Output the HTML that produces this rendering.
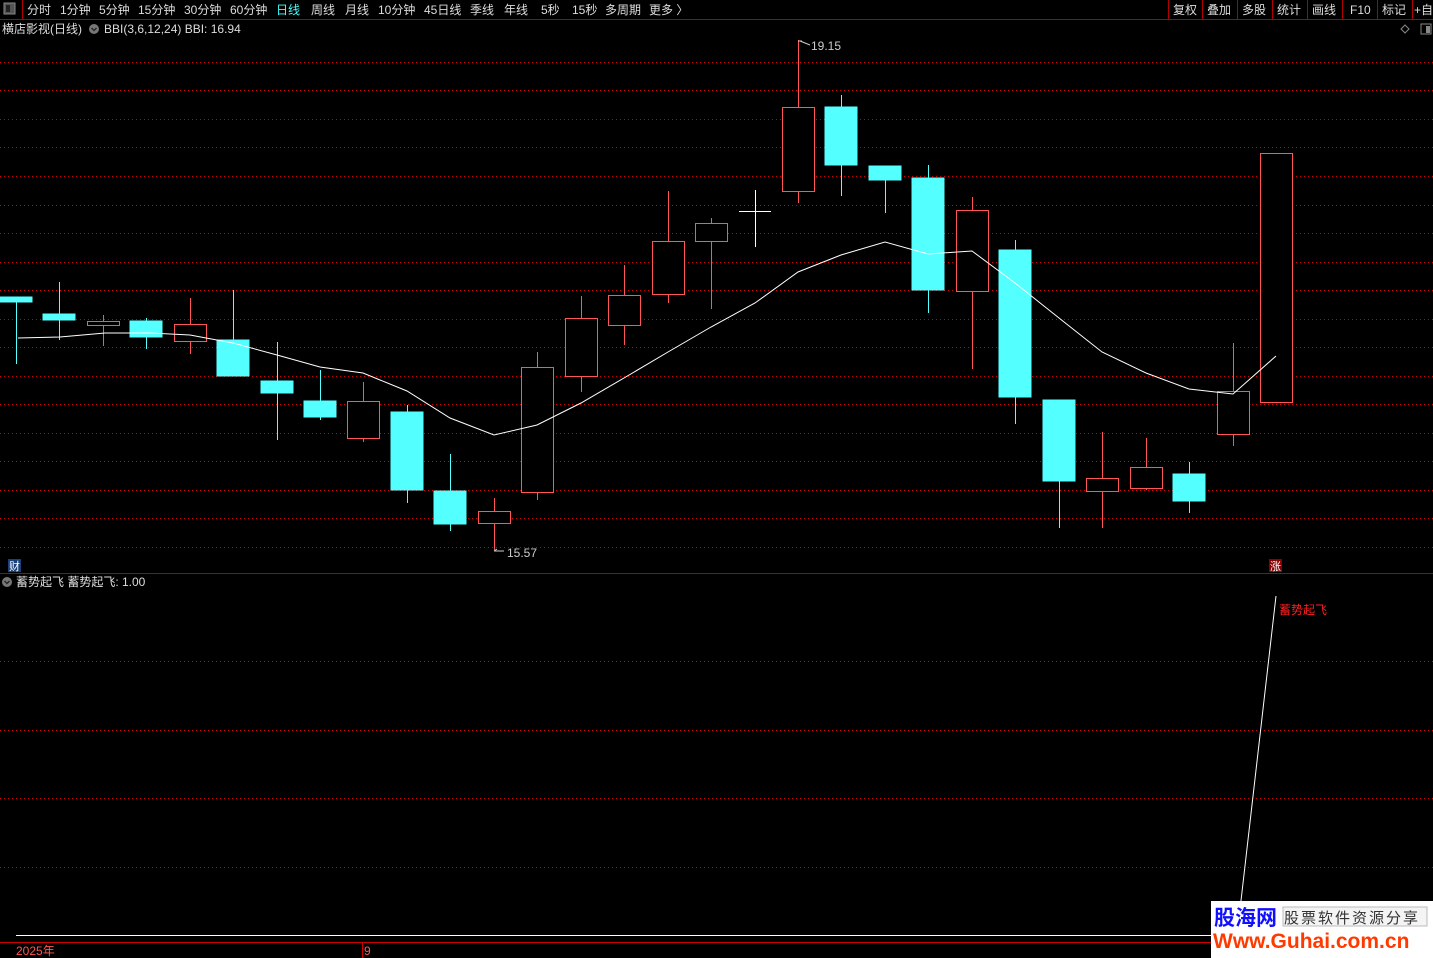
<!DOCTYPE html>
<html><head><meta charset="utf-8"><style>
body{margin:0;background:#000;width:1433px;height:958px;overflow:hidden;font-family:"Liberation Sans","Noto Sans CJK SC",sans-serif;}
svg{position:absolute;left:0;top:0}
</style></head><body>
<svg width="1433" height="958" xmlns="http://www.w3.org/2000/svg">
<g font-family="Liberation Sans, Noto Sans CJK SC, sans-serif">
<line x1="0" y1="19.5" x2="1433" y2="19.5" stroke="#b00000"/>
<line x1="22.5" y1="0" x2="22.5" y2="19" stroke="#b00000"/>
<rect x="4" y="3" width="11" height="11" fill="#555" stroke="#888"/><rect x="6" y="5" width="4" height="7" fill="#222"/>
<text y="14" font-size="12" fill="#ddd">
<tspan x="27">分时</tspan><tspan x="60">1分钟</tspan><tspan x="99">5分钟</tspan><tspan x="138">15分钟</tspan><tspan x="184">30分钟</tspan><tspan x="230">60分钟</tspan><tspan x="276" fill="#4ff">日线</tspan><tspan x="311">周线</tspan><tspan x="345">月线</tspan><tspan x="378">10分钟</tspan><tspan x="424">45日线</tspan><tspan x="470">季线</tspan><tspan x="504">年线</tspan><tspan x="541">5秒</tspan><tspan x="572">15秒</tspan><tspan x="605">多周期</tspan><tspan x="649">更多 〉</tspan>
</text>
<g stroke="#b00000"><line x1="1168.5" y1="0" x2="1168.5" y2="19"/><line x1="1202.5" y1="0" x2="1202.5" y2="19"/><line x1="1237.5" y1="0" x2="1237.5" y2="19"/><line x1="1272.5" y1="0" x2="1272.5" y2="19"/><line x1="1307.5" y1="0" x2="1307.5" y2="19"/><line x1="1342.5" y1="0" x2="1342.5" y2="19"/><line x1="1377.5" y1="0" x2="1377.5" y2="19"/><line x1="1412.5" y1="0" x2="1412.5" y2="19"/></g>
<text y="14" font-size="12" fill="#ddd"><tspan x="1173">复权</tspan><tspan x="1207">叠加</tspan><tspan x="1242">多股</tspan><tspan x="1277">统计</tspan><tspan x="1312">画线</tspan><tspan x="1350">F10</tspan><tspan x="1382">标记</tspan><tspan x="1414">+自</tspan></text>
<text x="2" y="33" font-size="12" fill="#ddd">横店影视(日线)</text>
<circle cx="94" cy="29" r="5" fill="#777"/><path d="M91.5 28l2.5 2.5 2.5-2.5" stroke="#222" fill="none" stroke-width="1.3"/>
<text x="104" y="33" font-size="12" fill="#ddd">BBI(3,6,12,24)  BBI: 16.94</text>
<path d="M1405 25l4 4-4 4-4-4z" stroke="#888" fill="none"/>
<rect x="1421" y="24" width="10" height="10" fill="none" stroke="#888"/><rect x="1426" y="26" width="4" height="7" fill="#888"/>
<g stroke="#d00000" stroke-dasharray="1 3" shape-rendering="crispEdges">
<line x1="0" x2="1433" y1="62.5" y2="62.5"/><line x1="0" x2="1433" y1="90.5" y2="90.5"/><line x1="0" x2="1433" y1="119.5" y2="119.5"/><line x1="0" x2="1433" y1="147.5" y2="147.5"/><line x1="0" x2="1433" y1="176.5" y2="176.5"/><line x1="0" x2="1433" y1="205.5" y2="205.5"/><line x1="0" x2="1433" y1="233.5" y2="233.5"/><line x1="0" x2="1433" y1="262.5" y2="262.5"/><line x1="0" x2="1433" y1="290.5" y2="290.5"/><line x1="0" x2="1433" y1="319.5" y2="319.5"/><line x1="0" x2="1433" y1="347.5" y2="347.5"/><line x1="0" x2="1433" y1="376.5" y2="376.5"/><line x1="0" x2="1433" y1="404.5" y2="404.5"/><line x1="0" x2="1433" y1="433.5" y2="433.5"/><line x1="0" x2="1433" y1="461.5" y2="461.5"/><line x1="0" x2="1433" y1="490.5" y2="490.5"/><line x1="0" x2="1433" y1="518.5" y2="518.5"/><line x1="0" x2="1433" y1="547.5" y2="547.5"/>
<line x1="0" x2="1433" y1="661.5" y2="661.5"/><line x1="0" x2="1433" y1="730.5" y2="730.5"/><line x1="0" x2="1433" y1="798.5" y2="798.5"/><line x1="0" x2="1433" y1="867.5" y2="867.5"/>
</g>
<line x1="0" y1="573.5" x2="1433" y2="573.5" stroke="#b00000"/>
<g fill="#54ffff" stroke="#54ffff">
<line x1="16.5" y1="297" x2="16.5" y2="364"/><rect x="0" y="297" width="32" height="5"/>
<line x1="59.5" y1="282" x2="59.5" y2="340"/><rect x="43" y="314" width="32" height="6"/>
<line x1="146.5" y1="318" x2="146.5" y2="349"/><rect x="130" y="321" width="32" height="16"/>
<line x1="233.5" y1="290" x2="233.5" y2="376"/><rect x="217" y="340" width="32" height="36"/>
<line x1="277.5" y1="342" x2="277.5" y2="440"/><rect x="261" y="381" width="32" height="12"/>
<line x1="320.5" y1="370" x2="320.5" y2="420"/><rect x="304" y="401" width="32" height="16"/>
<line x1="407.5" y1="405" x2="407.5" y2="503"/><rect x="391" y="412" width="32" height="78"/>
<line x1="450.5" y1="454" x2="450.5" y2="531"/><rect x="434" y="491" width="32" height="33"/>
<line x1="841.5" y1="95" x2="841.5" y2="196"/><rect x="825" y="107" width="32" height="58"/>
<line x1="885.5" y1="166" x2="885.5" y2="213"/><rect x="869" y="166" width="32" height="14"/>
<line x1="928.5" y1="165" x2="928.5" y2="313"/><rect x="912" y="178" width="32" height="112"/>
<line x1="1015.5" y1="240" x2="1015.5" y2="424"/><rect x="999" y="250" width="32" height="147"/>
<line x1="1059.5" y1="400" x2="1059.5" y2="528"/><rect x="1043" y="400" width="32" height="81"/>
<line x1="1189.5" y1="462" x2="1189.5" y2="513"/><rect x="1173" y="474" width="32" height="27"/>
</g>
<g stroke="#ff5555" fill="#000">
<line x1="103.5" y1="315" x2="103.5" y2="346"/><rect x="87.5" y="321.5" width="32" height="4"/>
<line x1="190.5" y1="298" x2="190.5" y2="354"/><rect x="174.5" y="324.5" width="32" height="17"/>
<line x1="363.5" y1="382" x2="363.5" y2="442"/><rect x="347.5" y="401.5" width="32" height="37"/>
<line x1="494.5" y1="498" x2="494.5" y2="550"/><rect x="478.5" y="511.5" width="32" height="12"/>
<line x1="537.5" y1="352" x2="537.5" y2="500"/><rect x="521.5" y="367.5" width="32" height="125"/>
<line x1="581.5" y1="296" x2="581.5" y2="392"/><rect x="565.5" y="318.5" width="32" height="58"/>
<line x1="624.5" y1="265" x2="624.5" y2="345"/><rect x="608.5" y="295.5" width="32" height="30"/>
<line x1="668.5" y1="191" x2="668.5" y2="303"/><rect x="652.5" y="241.5" width="32" height="53"/>
<line x1="711.5" y1="218" x2="711.5" y2="309"/><rect x="695.5" y="223.5" width="32" height="18"/>
<line x1="798.5" y1="40" x2="798.5" y2="203"/><rect x="782.5" y="107.5" width="32" height="84"/>
<line x1="972.5" y1="197" x2="972.5" y2="369"/><rect x="956.5" y="210.5" width="32" height="81"/>
<line x1="1102.5" y1="432" x2="1102.5" y2="528"/><rect x="1086.5" y="478.5" width="32" height="13"/>
<line x1="1146.5" y1="438" x2="1146.5" y2="490"/><rect x="1130.5" y="467.5" width="32" height="21"/>
<line x1="1233.5" y1="343" x2="1233.5" y2="446"/><rect x="1217.5" y="391.5" width="32" height="43"/>
<rect x="1260.5" y="153.5" width="32" height="249"/>
</g>
<g stroke="#fff"><line x1="755.5" y1="190" x2="755.5" y2="247"/><line x1="739" y1="211.5" x2="771" y2="211.5"/></g>
<polyline fill="none" stroke="#fff" stroke-width="1" points="18,338 60,337 105,333 150,333 190,335 233,343 277,355 320,367 363,373 407,391 450,418 494,435 537,425 581,403 624,378 668,352 711,327 755,303 798,272 841,255 885,242 928,254 972,251 1015,283 1059,318 1102,352 1146,373 1189,389 1233,394 1276,356"/>
<text x="811" y="50" font-size="12" fill="#ccc">19.15</text><path d="M798 41h4M800 41l10 4" stroke="#ccc" fill="none"/>
<text x="507" y="557" font-size="12" fill="#ccc">15.57</text><path d="M494 551l10 0M494 551l3-2" stroke="#ccc" fill="none"/>
<rect x="8" y="559" width="13" height="13" fill="#1a3f7a"/><text x="9" y="570" font-size="11" fill="#fff">财</text>
<rect x="1269" y="559" width="13" height="13" fill="#8b0000"/><text x="1270" y="570" font-size="11" fill="#fff">涨</text>
<circle cx="7" cy="582" r="5" fill="#777"/><path d="M4.5 581l2.5 2.5 2.5-2.5" stroke="#222" fill="none" stroke-width="1.3"/>
<text x="16" y="586" font-size="12" fill="#ddd">蓄势起飞  蓄势起飞: 1.00</text>
<polyline fill="none" stroke="#fff" points="16,935.5 1237,935.5 1276,596"/>
<text x="1279" y="614" font-size="12" fill="#ff2020">蓄势起飞</text>
<line x1="0" y1="942.5" x2="1433" y2="942.5" stroke="#d00000"/>
<line x1="362.5" y1="943" x2="362.5" y2="958" stroke="#d00000"/>
<text x="16" y="955" font-size="12" fill="#ff5555">2025年</text>
<text x="364" y="955" font-size="12" fill="#ff5555">9</text>
<rect x="1211" y="901" width="222" height="57" fill="#fff"/>
<text x="1214" y="925" font-size="21" font-weight="bold" fill="#1010ff">股海网</text>
<rect x="1283" y="907" width="144" height="19" fill="#f4f4f4" stroke="#bbb"/>
<text x="1284" y="923" font-size="15" fill="#333" letter-spacing="2">股票软件资源分享</text>
<text x="1213" y="948" font-size="21" font-weight="bold" fill="#ff3a00">Www.Guhai.com.cn</text>
</g>
</svg>
</body></html>
